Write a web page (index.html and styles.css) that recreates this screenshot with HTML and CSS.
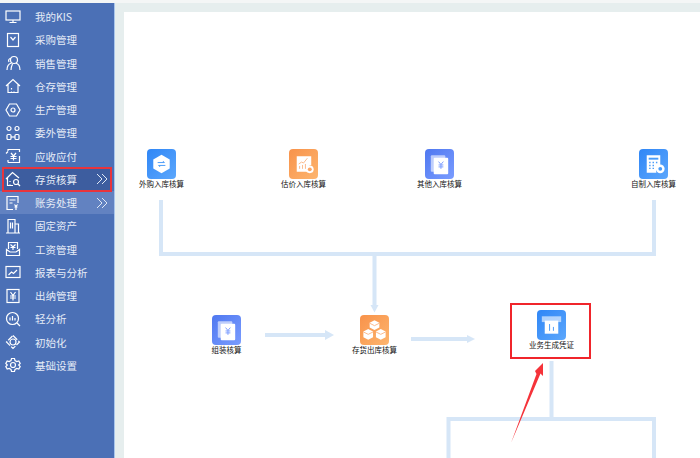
FILE: index.html
```html
<!DOCTYPE html>
<html lang="zh-CN">
<head>
    <meta charset="UTF-8">
    <meta name="viewport" content="width=device-width, initial-scale=1.0">
    <title>存货核算</title>
    <link rel="stylesheet" href="styles.css">
</head>
<body>
    <div class="top-strip"></div>
    <div class="layout">
        <nav class="sidebar">
            <div class="menu-item">
                <svg class="menu-icon" viewBox="0 0 16 16"><rect x="1" y="2" width="14" height="9"/><path d="M8 11v2M4.5 13.500h7"/></svg>
                <span>我的KIS</span>
            </div>
            <div class="menu-item">
                <svg class="menu-icon" viewBox="0 0 16 16"><rect x="2.500" y="1.500" width="11" height="13"/><path d="M5.500 5l2.500 3 2.500-3"/></svg>
                <span>采购管理</span>
            </div>
            <div class="menu-item">
                <svg class="menu-icon" viewBox="0 0 16 16"><circle cx="9" cy="5" r="3.500"/><path d="M2 15c0-4 1-6 4.500-7M15 15c0-4-1.500-6-4-7M6 3.500C4 3.500 3 5 4 7M6 15c0-2 .5-4 1.500-6"/></svg>
                <span>销售管理</span>
            </div>
            <div class="menu-item">
                <svg class="menu-icon" viewBox="0 0 16 16"><path d="M1 8l7-6.500L15 8M3 6.500V14.500H13V6.500"/><path d="M6.500 10v1.500M6.500 13v.5M9 13v.5"/></svg>
                <span>仓存管理</span>
            </div>
            <div class="menu-item">
                <svg class="menu-icon" viewBox="0 0 16 16"><path d="M4.500 2h7L15 8l-3.500 6h-7L1 8z"/><circle cx="8" cy="8" r="2"/></svg>
                <span>生产管理</span>
            </div>
            <div class="menu-item">
                <svg class="menu-icon" viewBox="0 0 16 16"><rect x="2" y="1.500" width="4" height="4" rx="2"/><rect x="10" y="1.500" width="4" height="4" rx="2"/><rect x="2" y="9.500" width="4" height="5" rx="1"/><rect x="10" y="9.500" width="4" height="5" rx="1"/><path d="M6 12h4"/></svg>
                <span>委外管理</span>
            </div>
            <div class="menu-item">
                <svg class="menu-icon" viewBox="0 0 16 16"><path d="M3 3V1.500H14.500V4M14.500 8v6.500H3M1 5.500L3 3.500M3 14.500V12"/><path d="M6 5l2.500 3L11 5M5.500 8.500h6M5.500 10.500h6M8.500 8v4.500"/></svg>
                <span>应收应付</span>
            </div>
            <div class="menu-item menu-item-active">
                <svg class="menu-icon" viewBox="0 0 16 16"><path d="M1 8l6.500-6.500L14 7M2.500 7v7.500H8"/><path d="M5 10v1M5 13v.5"/><circle cx="11" cy="11" r="2.500"/><path d="M13 13l2 2"/></svg>
                <span>存货核算</span>
                <svg class="menu-more" viewBox="0 0 12 12"><path d="M1 1l5 5-5 5M6 1l5 5-5 5"/></svg>
            </div>
            <div class="menu-item menu-item-hover">
                <svg class="menu-icon" viewBox="0 0 16 16"><path d="M8 14.500H2V1.500H13V8"/><path d="M4.500 5h6M4.500 8h3"/><path d="M9.500 9.500l1.500 2 1.500-2M9.500 12h3M11 11.500v3.500"/></svg>
                <span>账务处理</span>
                <svg class="menu-more" viewBox="0 0 12 12"><path d="M1 1l5 5-5 5M6 1l5 5-5 5"/></svg>
            </div>
            <div class="menu-item">
                <svg class="menu-icon" viewBox="0 0 16 16"><path d="M1 15h14M3 15V1.500H10V15M10 6h3.500V15M5.500 4.500v6M7.500 4.500v6"/></svg>
                <span>固定资产</span>
            </div>
            <div class="menu-item">
                <svg class="menu-icon" viewBox="0 0 16 16"><path d="M3.500 8V1.500H12.500V8M1.500 8.500V14.500H14.500V8.500L11 11H5z"/><path d="M5.500 3.500l2.500 2.500 2.500-2.500M5.500 6.500h5M8 6v3"/></svg>
                <span>工资管理</span>
            </div>
            <div class="menu-item">
                <svg class="menu-icon" viewBox="0 0 16 16"><rect x="1" y="2.500" width="14" height="11"/><path d="M3.500 11l3-3 2 1.500L12 6"/></svg>
                <span>报表与分析</span>
            </div>
            <div class="menu-item">
                <svg class="menu-icon" viewBox="0 0 16 16"><rect x="2" y="1.500" width="12" height="13"/><path d="M5.500 4l2.500 3.500L10.500 4M5 8h6M5 10h6M8 7.500v5"/></svg>
                <span>出纳管理</span>
            </div>
            <div class="menu-item">
                <svg class="menu-icon" viewBox="0 0 16 16"><circle cx="7.500" cy="7.500" r="6"/><path d="M5 6.500v3M7.500 5v4.500M10 7v2.500M12 12l3 3"/></svg>
                <span>轻分析</span>
            </div>
            <div class="menu-item">
                <svg class="menu-icon" viewBox="0 0 16 16"><circle cx="8" cy="8" r="3"/><path d="M8 1.500L14.500 8 8 14.500 1.500 8z" stroke-dasharray="6 1.500"/></svg>
                <span>初始化</span>
            </div>
            <div class="menu-item">
                <svg class="menu-icon" viewBox="0 0 16 16"><circle cx="8" cy="8" r="2.500"/><path d="M6.500 1.500h3l.5 2 1.800 1 2-.6 1.400 2.600-1.500 1.500 1.500 1.500-1.400 2.600-2-.6-1.800 1-.5 2h-3l-.5-2-1.800-1-2 .6L.8 9.500 2.300 8 .8 6.500l1.400-2.600 2 .6 1.800-1z"/></svg>
                <span>基础设置</span>
            </div>
        </nav>

        <main class="content">
            <div class="panel"></div>
        </main>
    </div>

    <!-- flow chart, coordinates are the page's -->
    <svg class="lines" viewBox="0 0 700 458">
        <path d="M161 200V254H654V200M374.500 254V306"/>
        <path d="M265 335H326M411 339H468M551.500 361V419M448.500 458V419H654V458"/>
        <path class="head" d="M370.500 305h8l-4 7.500zM325 330l9 5-9 5zM467 335l8 4-8 4z"/>
    </svg>

    <div class="node node-wgrk">
        <div class="node-icon icon-blue">
            <svg viewBox="0 0 30 30"><path class="solid" d="M15 5.500l8.500 4.800v9.400L15 24.500l-8.500-4.800v-9.400z"/><path class="thin" d="M11 13.500h7l-1.500-1.500M19 16.500h-7l1.500 1.500"/></svg>
        </div>
        <span>外购入库核算</span>
    </div>
    <div class="node node-gjrk">
        <div class="node-icon icon-orange">
            <svg viewBox="0 0 30 30"><path class="solid" d="M8 7h15v9a5 5 0 0 0-4 7H8z"/><circle class="solid" cx="21.500" cy="20.500" r="4"/><path class="thin-orange" d="M10 15l3-2 2 1 4-5M11 17v3M14 16v4M17 15v5"/><circle class="fill-orange" cx="21.500" cy="20.500" r="2"/></svg>
        </div>
        <span>估价入库核算</span>
    </div>
    <div class="node node-qtrk">
        <div class="node-icon icon-indigo">
            <svg viewBox="0 0 30 30"><rect class="pale" x="6" y="6" width="15" height="17" rx="1"/><rect class="solid" x="9" y="8.500" width="15" height="17" rx="1"/><path class="thin-indigo" d="M14 12.500l2.500 3 2.500-3M14 16h5M14 18h5M16.500 15.500v4.500"/></svg>
        </div>
        <span>其他入库核算</span>
    </div>
    <div class="node node-zzrk">
        <div class="node-icon icon-blue">
            <svg viewBox="0 0 30 30"><path class="solid" d="M8 6h14v11a6 6 0 0 0-4 7H8z"/><circle class="solid" cx="22" cy="20" r="4.500"/><rect class="fill-blue" x="10" y="8.500" width="10" height="2"/><path class="dots" d="M10.500 13.500h1.500M14 13.500h1.500M17.500 13.500h1.500M10.500 16.500h1.500M14 16.500h1.500M10.500 19.500h1.500M14 19.500h1.500"/><circle class="fill-blue" cx="22" cy="20" r="2"/></svg>
        </div>
        <span>自制入库核算</span>
    </div>
    <div class="node node-zzhs">
        <div class="node-icon icon-indigo">
            <svg viewBox="0 0 30 30"><rect class="pale" x="6" y="6" width="15" height="17" rx="1"/><rect class="solid" x="9" y="8.500" width="15" height="17" rx="1"/><path class="thin-indigo" d="M14 12.500l2.500 3 2.500-3M14 16h5M14 18h5M16.500 15.500v4.500"/></svg>
        </div>
        <span>组装核算</span>
    </div>
    <div class="node node-chck">
        <div class="node-icon icon-orange">
            <svg viewBox="0 0 30 30"><path class="solid" d="M15 5l5 2.500v5L15 15l-5-2.500v-5zM8.500 14l5 2.500v6L8.500 25l-5-2.500v-6zM21.500 14l5 2.500v6l-5 2.500-5-2.500v-6z"/><path class="thin-orange" d="M10 8l5 2.500L20 8M3.500 17l5 2.500 5-2.500M16.500 17l5 2.500 5-2.500"/></svg>
        </div>
        <span>存货出库核算</span>
    </div>
    <div class="node node-ywsc">
        <div class="node-icon icon-blue">
            <svg viewBox="0 0 30 30"><rect class="pale" x="5" y="6" width="20" height="6"/><path class="solid" d="M8 10.500h14V24H8z"/><path class="thin-blue" d="M13 14v7M17 17v4"/></svg>
        </div>
        <span>业务生成凭证</span>
    </div>

    <div class="mark-box"></div>
    <svg class="mark-arrow" viewBox="0 0 700 458"><path d="M511 443L536.500 374l-1.500-3 8-8 0 13-2.500-2.500z"/></svg>
</body>
</html>
```

FILE: styles.css
```css
html, body {
    margin: 0;
    height: 100%;
    overflow: hidden;
}
body {
    position: relative;
    background-color: #fff;
    font-family: "Noto Sans CJK SC", "Noto Sans", sans-serif;
}
.top-strip {
    height: 3px;
    background-color: #f4f6f6;
}
.layout {
    display: flex;
    height: 455px;
}

/* left menu */
.sidebar {
    width: 115px;
    padding-top: 2px;
    box-sizing: border-box;
    background-color: #4b70b6;
    border-right: 1px solid #a9c6ec;
    flex-shrink: 0;
}
.menu-item {
    display: flex;
    align-items: center;
    height: 23.25px;
    padding-left: 5px;
    box-sizing: border-box;
    color: #e6ecf6;
    font-size: 10.5px;
}
.menu-item span {
    margin-left: 14px;
}
.menu-icon {
    width: 16px;
    height: 16px;
    fill: none;
    stroke: #fff;
    stroke-width: 1.2;
}
.menu-more {
    width: 12px;
    height: 12px;
    margin-left: auto;
    margin-right: 6px;
    fill: none;
    stroke: #dfe7f5;
    stroke-width: 1;
}
.menu-item-active {
    background-color: #3d5d9f;
    outline: 2px solid #e8343c;
    outline-offset: -1px;
    margin: 0 3px;
    padding-left: 2px;
}
.menu-item-active .menu-more {
    margin-right: 3px;
}
.menu-item-hover {
    background-color: #6282c1;
}

/* main area */
.content {
    flex: 1;
    padding: 9px 0 0 9px;
    background-color: #e6eeee;
}
.panel {
    height: 100%;
    background-color: #fff;
}

/* flow chart */
.lines, .mark-arrow {
    position: absolute;
    left: 0;
    top: 0;
    width: 700px;
    height: 458px;
}
.lines path {
    fill: none;
    stroke: #d6e6f7;
    stroke-width: 4;
}
.lines .head {
    fill: #d6e6f7;
    stroke: none;
}
.node {
    position: absolute;
    width: 69px;
    display: flex;
    flex-direction: column;
    align-items: center;
    color: #111;
    font-size: 7.5px;
    line-height: 10px;
}
.node-icon {
    width: 29px;
    height: 30px;
    border-radius: 4px;
}
.node-icon svg {
    display: block;
    width: 29px;
    height: 30px;
}
.node-wgrk { left: 127px; top: 149px; }
.node-gjrk { left: 269px; top: 149px; }
.node-qtrk { left: 405px; top: 149px; }
.node-zzrk { left: 619px; top: 149px; }
.node-zzhs { left: 192px; top: 315px; }
.node-chck { left: 340px; top: 315px; }
.node-ywsc { left: 517px; top: 310px; }
.icon-blue { background: linear-gradient(135deg, #2f86f6, #5ca7fc); }
.icon-orange { background: linear-gradient(135deg, #f8924a, #fdb56e); }
.icon-indigo { background: linear-gradient(135deg, #4f78f0, #7a9cff); }
.solid { fill: #fff; }
.pale { fill: #fff; fill-opacity: 0.6; }
.fill-blue { fill: #4a9cf9; }
.fill-orange { fill: #fba565; }
.thin, .thin-blue, .thin-orange, .thin-indigo, .dots {
    fill: none;
    stroke-width: 1;
}
.thin, .thin-blue, .dots { stroke: #4a9cf9; }
.thin-orange { stroke: #fbb98a; }
.thin-indigo { stroke: #7a9cff; }
.dots { stroke-width: 1.5; }

/* red annotation */
.mark-box {
    position: absolute;
    left: 510px;
    top: 303px;
    width: 81px;
    height: 56px;
    box-sizing: border-box;
    border: 2px solid #f0252b;
}
.mark-arrow path {
    fill: #f5333a;
}
```
